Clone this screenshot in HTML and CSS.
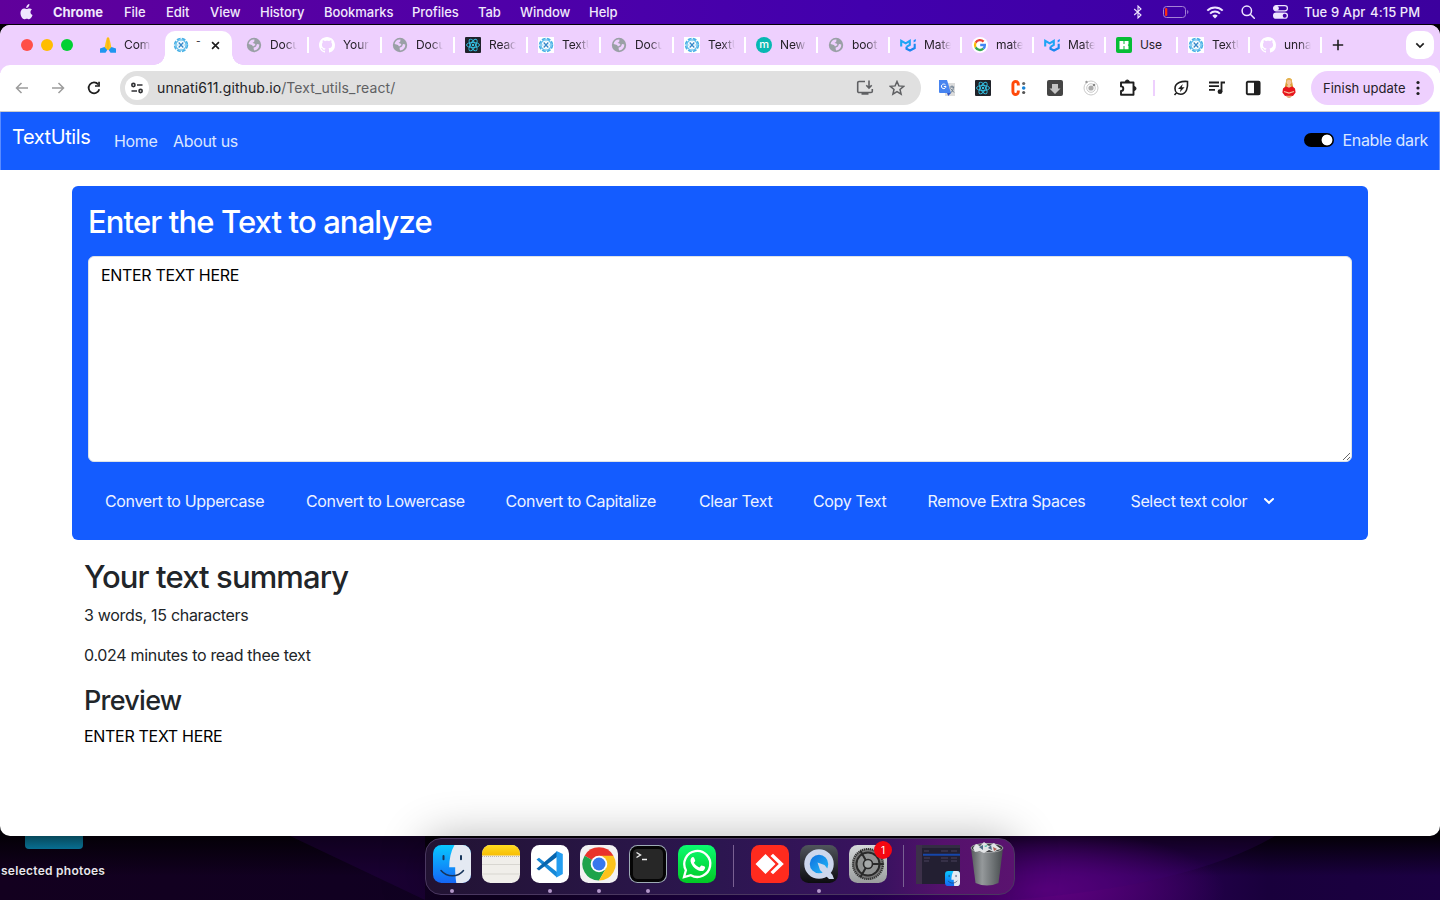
FILE: index.html
```html
<!DOCTYPE html>
<html lang="en">
<head>
<meta charset="utf-8">
<title>TextUtils</title>
<link rel="stylesheet" href="styles.css">
</head>
<body>
<svg class="defs" width="0" height="0">
  <defs>
    <symbol id="globe" viewBox="0 0 16 16"><circle cx="8" cy="8" r="7.200" fill="#9aa0a6"/><path d="M8.500 2.500C5.500 2 3 4 2.600 6.900L6 8l1 1.500 2.500-1.500L8.500 6.500 6.500 6 8.200 4.700ZM13.300 7.500 11 7 10 9.500 7.500 10.800 8 13.400C11 13.300 13.300 11 13.300 7.500Z" fill="#eed0fe"/></symbol>
    <symbol id="github" viewBox="0 0 16 16"><path fill="#fff" d="M8 0C3.580 0 0 3.580 0 8c0 3.540 2.290 6.530 5.470 7.590.4.070.55-.17.55-.38 0-.19-.01-.82-.01-1.490-2.010.37-2.530-.49-2.690-.94-.09-.23-.48-.94-.82-1.130-.28-.15-.68-.52-.01-.53.63-.01 1.080.58 1.230.82.72 1.210 1.870.87 2.330.66.07-.52.28-.87.51-1.070-1.780-.2-3.640-.89-3.640-3.950 0-.87.31-1.590.82-2.150-.08-.2-.36-1.020.08-2.120 0 0 .67-.21 2.200.82.64-.18 1.320-.27 2-.27s1.360.09 2 .27c1.530-1.040 2.200-.82 2.200-.82.44 1.100.16 1.920.08 2.120.51.56.82 1.270.82 2.150 0 3.070-1.870 3.750-3.650 3.950.29.25.54.73.54 1.480 0 1.070-.01 1.930-.01 2.200 0 .21.15.46.55.38A8 8 0 0 0 16 8c0-4.420-3.580-8-8-8Z"/></symbol>
    <symbol id="textapp" viewBox="0 0 16 16"><rect width="16" height="16" fill="#fff"/><circle cx="8" cy="8" r="6.400" fill="none" stroke="#4bb2e6" stroke-width="1.700" stroke-dasharray="3.800 1.230"/><circle cx="8" cy="8" r="5.100" fill="none" stroke="#62bdeb" stroke-width="1.300"/><path d="M5.700 5.500 10.300 10.500M10.300 5.500 5.700 10.500" stroke="#3789c9" stroke-width="1.300"/><path d="M3 8h2.500M10.500 8H13M8 3v1.500M8 11.500V13" stroke="#8bd0f1"/></symbol>
    <symbol id="react" viewBox="0 0 16 16"><rect width="16" height="16" rx="1" fill="#20232a"/><g fill="none" stroke="#35c4e8" stroke-width=".9"><ellipse cx="8" cy="8" rx="6.500" ry="2.600"/><ellipse cx="8" cy="8" rx="6.500" ry="2.600" transform="rotate(60 8 8)"/><ellipse cx="8" cy="8" rx="6.500" ry="2.600" transform="rotate(120 8 8)"/></g><circle cx="8" cy="8" r="1.200" fill="#35c4e8"/></symbol>
    <symbol id="mui" viewBox="0 0 16 16"><path d="M1.200 9.500V3.800L5.700 6.300 9.800 3.800V8L6.500 9.800" fill="none" stroke="#1ea5f5" stroke-width="2.100"/><path d="M6.500 9.800v2L10 13.500 14.700 11V6.700" fill="none" stroke="#1c87f0" stroke-width="2.100"/><path d="M13.600 3.200 15.800 2v2.300l-2.200 1.200Z" fill="#1e90ff"/></symbol>
    <symbol id="google" viewBox="0 0 16 16"><circle cx="8" cy="8" r="8" fill="#fff"/><g fill="none" stroke-width="2.300"><path d="M11.600 4.600A5 5 0 0 0 3.600 5.600" stroke="#ea4335"/><path d="M3.600 5.600a5 5 0 0 0 0 4.800" stroke="#fbbc05"/><path d="M3.600 10.400a5 5 0 0 0 7.700 1.300" stroke="#34a853"/><path d="M11.300 11.700A4.700 4.700 0 0 0 12.900 8H8.200" stroke="#4285f4"/></g></symbol>
    <symbol id="hands" viewBox="0 0 16 16"><path d="M8 0 6.800 1 5.500 6 4.600 10.500 6.500 13H9.500L11.400 10.500 10.500 6 9.200 1Z" fill="#ffc518"/><path d="M8 1v11" stroke="#e9a010" stroke-width=".6"/><path d="M0 11.500 4.500 10 7.300 13 5.500 15.800H0ZM16 11.500 11.500 10 8.700 13 10.500 15.800H16Z" fill="#1e96f0"/></symbol>
    <symbol id="finder" viewBox="0 0 38 38"><defs><linearGradient id="fb" x2="0" y2="1"><stop stop-color="#08c8ff"/><stop offset="1" stop-color="#1565f5"/></linearGradient></defs><rect width="38" height="38" rx="8.500" fill="url(#fb)"/><path d="M21.500 0H29.500A8.500 8.500 0 0 1 38 8.500V29.500A8.500 8.500 0 0 1 29.500 38H23.300C22.500 32 22 27 22.200 22.300H16.200C16.200 14 18 6 21.500 0Z" fill="#e4e9f2"/><path d="M10.500 11v3.300M28 11v3.300" stroke="#17345a" stroke-width="2" stroke-linecap="round"/><path d="M8 25.500c6 7 17 7 22.500 0" fill="none" stroke="#17345a" stroke-width="1.500" stroke-linecap="round"/></symbol>
  </defs>
</svg>

<div class="desktop">
  <header class="menubar">
    <svg class="apple" viewBox="0 0 14 17"><path fill="#efe6ff" d="M10.100 0c.1 1.300-.4 2.400-1.100 3.100C8.300 3.800 7.500 4.200 6.700 4.100c-.1-1.200.4-2.300 1.100-3C8.400.5 9.300.1 10.100 0ZM12.900 5.800c-2.400 1.500-2 4.900.6 6-.9 2.500-2.300 4.500-3.700 4.500-1 0-1.300-.6-2.500-.6s-1.600.6-2.500.6C2.500 16.300.5 12.700.5 9.600.5 6.500 2.400 4.700 4.500 4.700c1.100 0 2 .7 2.700.7.700 0 1.700-.8 3.100-.8 1 0 2 .4 2.600 1.200Z"/></svg>
    <nav class="menus"><b>Chrome</b><span>File</span><span>Edit</span><span>View</span><span>History</span><span>Bookmarks</span><span>Profiles</span><span>Tab</span><span>Window</span><span>Help</span></nav>
    <div class="status">
      <svg width="10" height="14" viewBox="0 0 10 14"><path d="M1.200 4 8 10 5 13V1L8 4 1.200 10" fill="none" stroke="#efe6ff" stroke-width="1.100"/></svg>
      <svg class="battery" width="26" height="12" viewBox="0 0 26 12"><rect x=".5" y=".5" width="22" height="11" rx="3" fill="none" stroke="#a582d6"/><rect x="2" y="2" width="2.300" height="8" rx="1" fill="#ff2a10"/><path d="M24.200 4v4c1.600-.6 1.600-3.400 0-4Z" fill="#a582d6"/></svg>
      <svg class="wifi" width="18" height="13" viewBox="0 0 18 13"><g fill="none" stroke="#efe6ff" stroke-width="2"><path d="M1.300 4.600a11 11 0 0 1 15.400 0M4.100 7.600a7 7 0 0 1 9.800 0"/></g><path d="M9 12.500 6.300 9.800a3.800 3.800 0 0 1 5.400 0Z" fill="#efe6ff"/></svg>
      <svg class="search" width="14" height="14" viewBox="0 0 14 14"><g fill="none" stroke="#efe6ff" stroke-width="1.500"><circle cx="5.800" cy="5.800" r="4.700"/><path d="m9.300 9.300 4 4" stroke-linecap="round"/></g></svg>
      <svg class="control" width="15" height="14" viewBox="0 0 15 14"><rect x=".6" y=".6" width="13.800" height="5.300" rx="2.600" fill="none" stroke="#efe6ff" stroke-width="1.200"/><circle cx="3.300" cy="3.250" r="2.500" fill="#efe6ff"/><rect y="7.500" width="15" height="6.300" rx="3.100" fill="#efe6ff"/><circle cx="11.700" cy="10.650" r="2" fill="#4300a5"/></svg>
      <span class="date">Tue 9 Apr</span><span class="clock">4:15 PM</span>
    </div>
  </header>

  <main class="window">
    <div class="tabstrip">
      <div class="lights"><i class="red"></i><i class="yellow"></i><i class="green"></i></div>
      <div class="tab plain"><svg><use href="#hands"/></svg><span>Com</span></div>
      <div class="tab active"><div class="shape"><svg><use href="#textapp"/></svg><span>-</span><svg class="close" viewBox="0 0 10 10"><path d="m1.200 1.200 7.600 7.600M8.800 1.200 1.200 8.800" stroke="#1f1f1f" stroke-width="1.800"/></svg></div></div>
      <div class="tab"><svg><use href="#globe"/></svg><span>Docu</span></div>
      <div class="tab"><svg><use href="#github"/></svg><span>Your</span></div>
      <div class="tab"><svg><use href="#globe"/></svg><span>Docu</span></div>
      <div class="tab"><svg><use href="#react"/></svg><span>Reac</span></div>
      <div class="tab"><svg><use href="#textapp"/></svg><span>TextU</span></div>
      <div class="tab"><svg><use href="#globe"/></svg><span>Docu</span></div>
      <div class="tab narrow"><svg><use href="#textapp"/></svg><span>TextU</span></div>
      <div class="tab narrow"><b class="m">m</b><span>New</span></div>
      <div class="tab narrow"><svg><use href="#globe"/></svg><span>boot</span></div>
      <div class="tab narrow"><svg><use href="#mui"/></svg><span>Mate</span></div>
      <div class="tab narrow"><svg><use href="#google"/></svg><span>mate</span></div>
      <div class="tab narrow"><svg><use href="#mui"/></svg><span>Mate</span></div>
      <div class="tab narrow full"><svg viewBox="0 0 16 16"><rect width="16" height="16" rx="2" fill="#06bd36"/><path d="M3.500 4h4v8.200h-4ZM8.500 4h4v3.300l-.8.8.8.800v3.300h-4Z" fill="#fff"/><path d="M7 7h2v2H7Z" fill="#fff"/></svg><span>Use</span></div>
      <div class="tab narrow"><svg><use href="#textapp"/></svg><span>TextU</span></div>
      <div class="tab narrow"><svg><use href="#github"/></svg><span>unna</span></div>
      <svg class="plus" width="12" height="12" viewBox="0 0 12 12"><path d="M6 .8v10.400M.8 6h10.400" stroke="#1f1f1f" stroke-width="1.600"/></svg>
      <div class="tabsearch"><svg width="10" height="7" viewBox="0 0 10 7"><path d="m1.300 1.300 3.700 3.700 3.700-3.700" fill="none" stroke="#1f1f1f" stroke-width="1.700"/></svg></div>
    </div>

    <div class="toolbar">
      <div class="navicons">
        <svg width="14" height="12" viewBox="0 0 14 12"><path d="M13 6H2M6.500 1 1.500 6l5 5" fill="none" stroke="#9c9c9c" stroke-width="1.500"/></svg>
        <svg width="14" height="12" viewBox="0 0 14 12"><path d="M1 6h11M7.500 1l5 5-5 5" fill="none" stroke="#9c9c9c" stroke-width="1.500"/></svg>
        <svg width="14" height="14" viewBox="0 0 14 14"><path d="M12.300 8.200A5.400 5.400 0 1 1 11.200 3.400" fill="none" stroke="#1f1f1f" stroke-width="1.800"/><path d="M12.900 .8v5H8V4.200h3.200V.8Z" fill="#1f1f1f"/></svg>
      </div>
      <div class="omnibox">
        <div class="siteinfo"><svg width="14" height="12" viewBox="0 0 14 12"><g fill="none" stroke="#303134" stroke-width="1.600"><circle cx="3.400" cy="3" r="1.600"/><path d="M7 3h5.500M1.500 9H7"/><circle cx="10.600" cy="9" r="1.600"/></g></svg></div>
        <div class="url">unnati611.github.io<span>/Text_utils_react/</span></div>
        <svg width="18" height="16" viewBox="0 0 18 16"><path d="M9 1.500H3A1.300 1.300 0 0 0 1.700 2.800v8.400A1.300 1.300 0 0 0 3 12.500h12a1.300 1.300 0 0 0 1.300-1.300V9M13 .5V8M10.300 5.200 13 8l2.700-2.800M5.500 14h7" fill="none" stroke="#5f6063" stroke-width="1.600"/></svg>
        <svg class="star" width="16" height="16" viewBox="0 0 16 16"><path d="m8 1.500 1.900 4.400 4.800.4-3.700 3.200 1.100 4.700L8 11.700l-4.100 2.500L5 9.500 1.300 6.300l4.800-.4Z" fill="none" stroke="#5f6063" stroke-width="1.500"/></svg>
      </div>
      <div class="extensions">
        <svg viewBox="0 0 16 16"><rect x="6" y="3" width="10" height="13" fill="#dcdcdc"/><path d="M0 0h8l4 13H1a1 1 0 0 1-1-1Z" fill="#4784f0"/><path d="m8 13 4 0-2.800 3Z" fill="#3155c8"/><path d="M6.500 4.900A2.300 2.300 0 1 0 7 6.500H4.800" fill="none" stroke="#fff" stroke-width="1"/><path d="M10.700 7h4.500M13 5.500V7M11.300 13c2.500-1.500 3-3.500 3-6M11.500 8.500l3.500 4" fill="none" stroke="#66798c"/></svg>
        <svg><use href="#react"/></svg>
        <svg viewBox="0 0 16 16"><path d="M7.300 5.500V4.200a2.700 2.700 0 0 0-5.400 0v7.600a2.700 2.700 0 0 0 5.400 0v-1.300" fill="none" stroke="#ff4a0b" stroke-width="2.900"/><circle cx="12.700" cy="3.500" r="1.600" fill="#666"/><circle cx="12.700" cy="8" r="1.800" fill="#1783d8"/><circle cx="12.700" cy="12.500" r="1.600" fill="#555"/></svg>
        <svg viewBox="0 0 16 16"><rect width="16" height="16" rx="2" fill="#454545"/><path d="M5 4h6v4.500h2.500L8 14 2.500 8.500H5Z" fill="#c4c4c4"/></svg>
        <svg viewBox="0 0 16 16"><g fill="none" stroke="#c9c9c9"><circle cx="8" cy="8" r="7"/><circle cx="8" cy="8" r="4.300"/></g><circle cx="8" cy="8" r="2.600" fill="#aaa"/><circle cx="11" cy="5" r="1.300" fill="#888"/><circle cx="3.500" cy="2" r="1.200" fill="#999"/></svg>
        <svg class="puzzle" viewBox="0 0 18 18"><path d="M2 3.500H14.500V15.800H2V12a2.300 2.300 0 0 0 0-4.600Z" fill="none" stroke="#1f1f1f" stroke-width="1.900" stroke-linejoin="round"/><path d="M6.300 3a2 2 0 0 1 4 0M15 7.500a2 2 0 0 1 0 4" fill="#1f1f1f" stroke="#1f1f1f"/></svg>
        <i class="rule"></i>
        <svg viewBox="0 0 16 16"><path d="M14.500 1.500C9 1 2 2.500 2 8.500c0 3.500 2.500 5.700 5.700 5.700 6 0 7.300-7 6.800-12.700ZM1.500 15l2-2.300" fill="none" stroke="#1f1f1f" stroke-width="1.600"/><path d="M9.800 4 5 9h2.700l-.9 3.300 4.800-5H8.800Z" fill="#1f1f1f"/></svg>
        <svg viewBox="0 0 16 16"><path d="M0 2.500h10M0 6.200h10M0 9.900h6M12.500 12V2.500H16" fill="none" stroke="#1f1f1f" stroke-width="1.800"/><circle cx="11" cy="11.700" r="2.400" fill="#1f1f1f"/></svg>
        <svg viewBox="0 0 16 16"><rect x="1.800" y="1.800" width="12.800" height="12.400" rx="1" fill="none" stroke="#1f1f1f" stroke-width="1.900"/><path d="M9 1.500h5.500v13H9Z" fill="#1f1f1f"/></svg>
        <svg class="avatar" viewBox="0 0 16 20"><path d="M5.500 1h5l1.800 8.500H3.700Z" fill="#dba23a"/><circle cx="8" cy="4" r="2.500" fill="#f6c49a"/><path d="M5 3Q5.500-.5 8 0q2.500-.5 3 3L8 1.700Z" fill="#e5b452"/><path d="M7 6h2l1 3H6Z" fill="#f6c49a"/><path d="m4.500 8.500 2 .5q1.500 1 3 0l2-.5 2.500 2 .6 4-2.600 3.500H4L1.400 14.500 2 10.500Z" fill="#e7151c"/><path d="M3 13.500 8 15l5-1.500" fill="none" stroke="#f8c2a0" stroke-width="1.300"/><path d="M4.500 17.800h7L9 20H7Z" fill="#e8ad80"/></svg>
      </div>
      <div class="update"><span>Finish update</span><svg width="4" height="16" viewBox="0 0 4 16"><g fill="#1f1f1f"><circle cx="2" cy="2.500" r="1.600"/><circle cx="2" cy="8" r="1.600"/><circle cx="2" cy="13.500" r="1.600"/></g></svg></div>
    </div>

    <div class="navbar">
      <a class="brand">TextUtils</a><a class="home">Home</a><a class="about">About us</a>
      <div class="mode"><i class="switch"></i><span>Enable dark</span></div>
    </div>

    <section class="analyzer">
      <h2>Enter the Text to analyze</h2>
      <textarea spellcheck="false">ENTER TEXT HERE</textarea>
      <div class="actions"><span>Convert to Uppercase</span><span>Convert to Lowercase</span><span>Convert to Capitalize</span><span>Clear Text</span><span>Copy Text</span><span>Remove Extra Spaces</span><span>Select text color</span><svg width="12" height="8" viewBox="0 0 12 8"><path d="m2 2 4 3.800L10 2" fill="none" stroke="#fff" stroke-width="2" stroke-linecap="round"/></svg></div>
    </section>
    <section class="summary">
      <h2>Your text summary</h2>
      <p>3 words, 15 characters</p>
      <p>0.024 minutes to read thee text</p>
      <h3>Preview</h3>
      <p class="preview">ENTER TEXT HERE</p>
    </section>
  </main>

  <footer class="shelf">
    <svg class="wallpaper" viewBox="0 0 1440 64" preserveAspectRatio="none"><path d="M290 0 425 64V0ZM1010 64Q1190 50 1275 0H1010Z" fill="#3b0070" opacity=".22"/></svg>
    <div class="folder"><i></i><span>selected photoes</span></div>
    <div class="dock">
      <div class="app on"><svg><use href="#finder"/></svg></div>
      <div class="app"><svg viewBox="0 0 38 38"><defs><linearGradient id="nt" x2="0" y2="1"><stop stop-color="#ffdc20"/><stop offset="1" stop-color="#f7bd05"/></linearGradient></defs><rect width="38" height="38" rx="8.500" fill="#f0eeea"/><path d="M0 10.500V8.500A8.500 8.500 0 0 1 8.500 0h21A8.500 8.500 0 0 1 38 8.500v2Z" fill="url(#nt)"/><path d="M0 19.500h38M0 29h38" stroke="#d2cfca" stroke-width=".8"/><path d="M0 11.500h38" stroke="#bbb7b0" stroke-dasharray="1 1"/></svg></div>
      <div class="app on"><svg viewBox="0 0 38 38"><rect width="38" height="38" rx="8.500" fill="#fff"/><path d="M5.500 14.500 8 12.700 26 27v5.500Z" fill="#1688d7"/><path d="M5.500 23.800 8 25.600 26 12V6.200Z" fill="#0765ae"/><path d="m25.500 6 6.300 3v20l-6.300 3.500Z" fill="#239df0"/></svg></div>
      <div class="app on"><svg viewBox="0 0 38 38"><rect width="38" height="38" rx="8.500" fill="#f2f1f2"/><path d="M19 19 4.600 10.700A16.600 16.600 0 0 1 33.400 10.700Z" fill="#e9332b"/><path d="M19 19 4.600 10.700A16.600 16.600 0 0 0 19 35.600L26.200 23Z" fill="#1ea34b"/><path d="M19 10.700H33.400A16.600 16.600 0 0 1 19 35.600l7.200-12.500Z" fill="#fcc21b"/><circle cx="19" cy="19" r="8.300" fill="#fff"/><circle cx="19" cy="19" r="6.500" fill="#3878ed"/></svg></div>
      <div class="app on"><svg viewBox="0 0 38 38"><rect width="38" height="38" rx="8.500" fill="#9eabb5"/><rect x="1" y="1" width="36" height="36" rx="7.500" fill="#050505"/><rect x="4" y="4" width="30" height="30" rx="4.500" fill="#272727"/><path d="m7.500 7.500 4 2.500-4 2.500M13 14.500h5" fill="none" stroke="#eee" stroke-width="1.400"/></svg></div>
      <div class="app"><svg viewBox="0 0 38 38"><defs><linearGradient id="wa" x2="0" y2="1"><stop stop-color="#0afb70"/><stop offset="1" stop-color="#03c825"/></linearGradient></defs><rect width="38" height="38" rx="8.500" fill="url(#wa)"/><path d="m6 32 1.900-6.800A13 13 0 1 1 12.800 30.200Z" fill="none" stroke="#fff" stroke-width="2.300"/><path d="M13.300 13c1-1.400 2.400-1.200 2.800-.2l1.100 2.800c.2.800-.9 1.700-1.300 2.200 1.300 2.300 3.100 3.700 5.500 4.700l1.900-2c.6-.5 3.300.9 3.700 1.300.5.600-.2 3-1.700 3.900C23 27.200 17 24.500 14.400 20.500 12.300 17.600 12 14.800 13.300 13Z" fill="#fff"/></svg></div>
      <i class="divider"></i>
      <div class="app"><svg viewBox="0 0 38 38"><rect width="38" height="38" rx="8.500" fill="#ff2b1e"/><path d="m4.500 19 10-10 10 10-10 10ZM19.500 11 22 8.700 32.800 19 22 29.300 19.500 27 27.800 19Z" fill="#fff"/></svg></div>
      <div class="app on"><svg viewBox="0 0 38 38"><defs><linearGradient id="qt" x2="0" y2="1"><stop stop-color="#50555c"/><stop offset="1" stop-color="#0c0c0f"/></linearGradient><linearGradient id="qb" x2="1" y2="1"><stop stop-color="#0d64dc"/><stop offset="1" stop-color="#23c3fa"/></linearGradient></defs><rect width="38" height="38" rx="8.500" fill="url(#qt)"/><circle cx="19" cy="19" r="12" fill="url(#qb)" stroke="#ccd7ec" stroke-width="5.500"/><path d="m17.500 17.500 7 2.500 8 10 1.500 4H29L20 25Z" fill="#ccd7ec"/></svg></div>
      <div class="app"><svg viewBox="0 0 38 38"><defs><linearGradient id="st" x2="0" y2="1"><stop stop-color="#d5d8da"/><stop offset="1" stop-color="#9b9e9e"/></linearGradient></defs><rect width="38" height="38" rx="8.500" fill="url(#st)"/><circle cx="19" cy="19" r="15" fill="#777" stroke="#333" stroke-width="2.200" stroke-dasharray="1.300 .7"/><circle cx="19" cy="19" r="11.500" fill="#919393" stroke="#292929" stroke-width="2"/><circle cx="19" cy="19" r="4.500" fill="#a6a9a9" stroke="#292929" stroke-width="1.600"/><path d="M23.500 19h11M16.800 15.200 11.500 6M16.800 22.800 11.500 32" stroke="#292929" stroke-width="2"/></svg><b class="badge">1</b></div>
      <i class="divider last"></i>
      <div class="thumb"><svg viewBox="0 0 44 39"><rect width="44" height="39" fill="#231f32"/><rect width="6" height="39" fill="#3c3049"/><path d="M6 0h38v3H6Z" fill="#332c43"/><path d="M7 9.700h37" stroke="#1646aa" stroke-width="2"/><path d="M8 6h5M8 13h6M8 16h5M25 6h7M25 13h7M25 16h7M35 6h6M35 13h6M35 16h6" stroke="#4a435c"/></svg><svg class="mini"><use href="#finder"/></svg></div>
      <svg class="trash" viewBox="0 0 34 44"><defs><linearGradient id="tr"><stop stop-color="#555a5c"/><stop offset=".35" stop-color="#95999b"/><stop offset=".7" stop-color="#6c7173"/><stop offset="1" stop-color="#474c4e"/></linearGradient></defs><path d="M1 6 5.500 41Q17 46 28.500 41L33 6Z" fill="url(#tr)"/><ellipse cx="17" cy="6" rx="16" ry="4.500" fill="#343539" stroke="#a1a4a6"/><path d="m3 6 3-4 4 2 4-4 5 4 5-3 3 3 4 3-4 1-3 2-5-2-5 3-5-2-4 1Z" fill="#e2e4e6"/><path d="m9 5 4-2v5ZM18 6l3-3 1 5Z" fill="#4c6c85"/><path d="m14 4 4-1-2 2Z" fill="#36b99b"/><path d="m23 5 4 2-3 2Z" fill="#ad5c50"/></svg>
    </div>
  </footer>
</div>
</body>
</html>
```
FILE: styles.css
```css
* { box-sizing: border-box; }
body { margin: 0; width: 1440px; height: 900px; overflow: hidden; font-family: Inter, "Liberation Sans", sans-serif; }
svg, i { display: block; flex: none; }
.defs { position: absolute; }
.desktop { height: 900px; display: flex; flex-direction: column; background: #030006; }

.menubar { height: 24px; display: flex; align-items: center; padding-left: 20px; background: linear-gradient(90deg, #60009b, #4f00a8 35%, #4200ad 60%, #3c009e); color: #f0e8fc; font-size: 13px; font-weight: 500; white-space: nowrap; }
.apple { width: 13px; height: 16px; margin-right: 20px; }
.menus { display: grid; grid-template-columns: 71px 42px 44px 50px 64px 88px 66px 42px 69px 40px; letter-spacing: -.05px; line-height: 14px; padding-bottom: 1px; }
.menus b { font-weight: 700; }
.status { display: flex; align-items: center; margin-left: 504px; }
.battery { margin-left: 20px; }
.wifi { margin-left: 17px; }
.search { margin-left: 17px; }
.control { margin-left: 18px; }
.date { margin-left: 16px; width: 66px; letter-spacing: .12px; }
.clock { letter-spacing: .1px; }

.window { margin-top: 1px; height: 811px; flex: none; background: #fff; border-radius: 10px; overflow: hidden; }
.tabstrip { display: flex; height: 48px; padding-bottom: 8px; background: #eed0fe; align-items: center; }
.lights { display: flex; gap: 8px; width: 90px; padding-left: 21px; flex: none; }
.lights i { width: 12px; height: 12px; border-radius: 50%; }
.red { background: #ff4f48; }
.yellow { background: #ffbd00; }
.green { background: #00d132; }
.tab { width: 73px; height: 16px; padding-left: 10px; display: flex; align-items: center; flex: none; border-right: 2px solid #fff; font-size: 12px; letter-spacing: -.1px; color: #252028; }
.tab svg { width: 16px; height: 16px; }
.tab.narrow { width: 72px; }
.tab.plain { border-color: transparent; }
.tab > span { margin-left: 8px; width: 27px; height: 17px; white-space: nowrap; mask-image: linear-gradient(90deg, #000 55%, transparent); }
.tab.full > span { mask-image: none; }
.tab.active { padding: 6px 0 0 2px; height: 40px; border: 0; }
.shape { position: relative; width: 67px; height: 34px; border-radius: 10px 10px 0 0; background: #fff; display: flex; align-items: center; padding: 0 0 6px 8px; }
.shape::before, .shape::after { content: ""; position: absolute; bottom: 0; width: 11px; height: 11px; }
.shape::before { left: -11px; background: radial-gradient(circle at 0 0, transparent 10.500px, #fff 11px); }
.shape::after { right: -11px; background: radial-gradient(circle at 100% 0, transparent 10.500px, #fff 11px); }
.shape span { width: 5px; height: 24px; line-height: 16px; font-size: 10px; margin-left: 7px; }
.shape .close { width: 9px; height: 9px; margin-left: 10px; }
.m { width: 16px; height: 16px; border-radius: 50%; background: #08b8b2; color: #fff; font-size: 11px; font-weight: 500; line-height: 15px; text-align: center; }
.plus { margin-left: 10px; }
.tabsearch { width: 28px; height: 28px; border-radius: 10px; background: #fff; margin-left: auto; margin-right: 6px; display: grid; place-items: center; }

.toolbar { position: relative; height: 47px; margin-top: -8px; padding: 0 6px 1px 0; background: #fff; border-radius: 10px 10px 0 0; display: flex; align-items: center; border-bottom: 1px solid #ccc; }
.navicons { width: 120px; padding-left: 15px; display: flex; align-items: center; gap: 22px; flex: none; }
.omnibox { width: 801px; height: 34px; border-radius: 17px; background: #e0e0e0; display: flex; align-items: center; padding-left: 5px; flex: none; }
.siteinfo { width: 24px; height: 24px; border-radius: 50%; background: #fff; display: grid; place-items: center; }
.url { font-size: 14px; margin-left: 8px; width: 699px; color: #202124; letter-spacing: .1px; }
.url span { color: #5f6063; }
.star { margin-left: 15px; }
.extensions { display: flex; align-items: center; margin-left: 18px; gap: 20px; }
.extensions svg { width: 16px; height: 16px; }
.extensions .puzzle { width: 18px; height: 18px; }
.extensions .rule { width: 2px; height: 16px; margin: 0 -3px 0 -4px; background: #eed0fe; }
.extensions .rule + svg { margin-left: 1px; }
.extensions .avatar { height: 20px; }
.update { width: 123px; height: 34px; border-radius: 17px; background: #eed0fe; margin-left: auto; display: flex; align-items: center; padding-left: 12px; font-size: 13px; color: #252028; }
.update span { width: 93px; white-space: nowrap; }

.navbar { height: 58px; background: #145cff; display: flex; padding: 0 11px; border: solid #5b8cff; border-width: 0 1px; color: #fff; }
.brand { width: 102px; font-size: 20px; line-height: 50px; letter-spacing: -.42px; }
.home, .about { width: 59px; font-size: 16px; line-height: 58px; color: #dbe6ff; white-space: nowrap; letter-spacing: -.32px; }
.about { width: 80px; }
.mode { margin-left: auto; display: flex; align-items: center; gap: 9px; height: 56px; font-size: 16px; color: #dbe6ff; letter-spacing: -.36px; }
.switch { width: 30px; height: 14px; border-radius: 7px; background: radial-gradient(circle at 23px 7px, #fff 5px, #000 5.800px); }

.analyzer { margin: 16px 72px 0; height: 354px; border-radius: 6px; background: #145cff; padding: 16px; color: #fff; }
h2, h3 { margin: 0; font-weight: 500; line-height: 40px; }
h2 { font-size: 31px; letter-spacing: -.88px; }
.analyzer h2 { height: 54px; }
textarea { display: block; width: 1264px; height: 206px; border: 1px solid #dee2e6; border-radius: 6px; padding: 6px 12px; font: 16px/24px Inter, sans-serif; letter-spacing: -.33px; color: #000; background: #fff; resize: vertical; outline: 0; }
.actions { display: grid; grid-template-columns: 201px 199.500px 193.500px 114px 114.500px 203px 132px 12px; align-items: center; margin: 20px 0 0 17px; height: 38px; font-size: 16px; letter-spacing: -.36px; color: #eef3ff; white-space: nowrap; }
.summary { padding: 17px 84px 0; color: #212529; font-size: 16px; line-height: 24px; letter-spacing: -.31px; }
.summary p { margin: 0 0 16px; }
.summary h2 { margin-bottom: 6px; }
.summary h3 { font-size: 27px; line-height: 36px; letter-spacing: -.75px; margin-bottom: 5px; }
.summary .preview { color: #000; }

.shelf { position: relative; height: 64px; display: flex; background: radial-gradient(ellipse 180px 60px at 1045px 54px, #5e007e, transparent), linear-gradient(180deg, #040007, transparent 40px), linear-gradient(90deg, #13001f, #100022 35%, #220050 55%, #320060 75%, #19003c 88%, #1b0042); }
.wallpaper { position: absolute; inset: 0; width: 1440px; height: 64px; }
.folder { width: 425px; position: relative; }
.folder i { width: 58px; height: 13px; margin-left: 25px; border-radius: 0 0 4px 4px; background: linear-gradient(#07485a, #086e91); }
.folder span { display: block; margin: 14px 0 0 1px; color: #e8e4ec; font-size: 12px; line-height: 15px; font-weight: 600; letter-spacing: .27px; text-shadow: 0 1px 1px #000; }
.dock { position: relative; margin-top: 2px; width: 590px; height: 57px; border: 1px solid #4a3760; border-radius: 16px; background: linear-gradient(90deg, #221333, #2c1650 50%, #3a1260 78%, #55116c 88%, #5a136f); display: flex; align-items: flex-start; padding: 6px 0 0 7px; box-shadow: 0 0 46px rgba(0, 0, 0, .3); }
.app { width: 38px; height: 38px; margin-right: 11px; position: relative; flex: none; }
.app svg { width: 38px; height: 38px; }
.app.on::after { content: ""; position: absolute; left: 17px; top: 44px; width: 4px; height: 4px; border-radius: 50%; background: #b498ca; }
.divider { width: 1px; height: 42px; background: #796092; margin: 0 17px 0 6px; }
.divider.last { margin: 0 12px 0 5px; }
.badge { position: absolute; right: -5px; top: -4px; width: 18px; height: 18px; border-radius: 50%; background: #f50712; color: #fff; font-size: 10px; line-height: 18px; font-weight: 400; text-align: center; }
.thumb { position: relative; width: 44px; height: 39px; }
.thumb svg { width: 44px; height: 39px; }
.thumb .mini { position: absolute; right: 0; bottom: -2px; width: 15px; height: 15px; }
.trash { width: 34px; height: 44px; margin: -3px 0 0 10px; }
```
